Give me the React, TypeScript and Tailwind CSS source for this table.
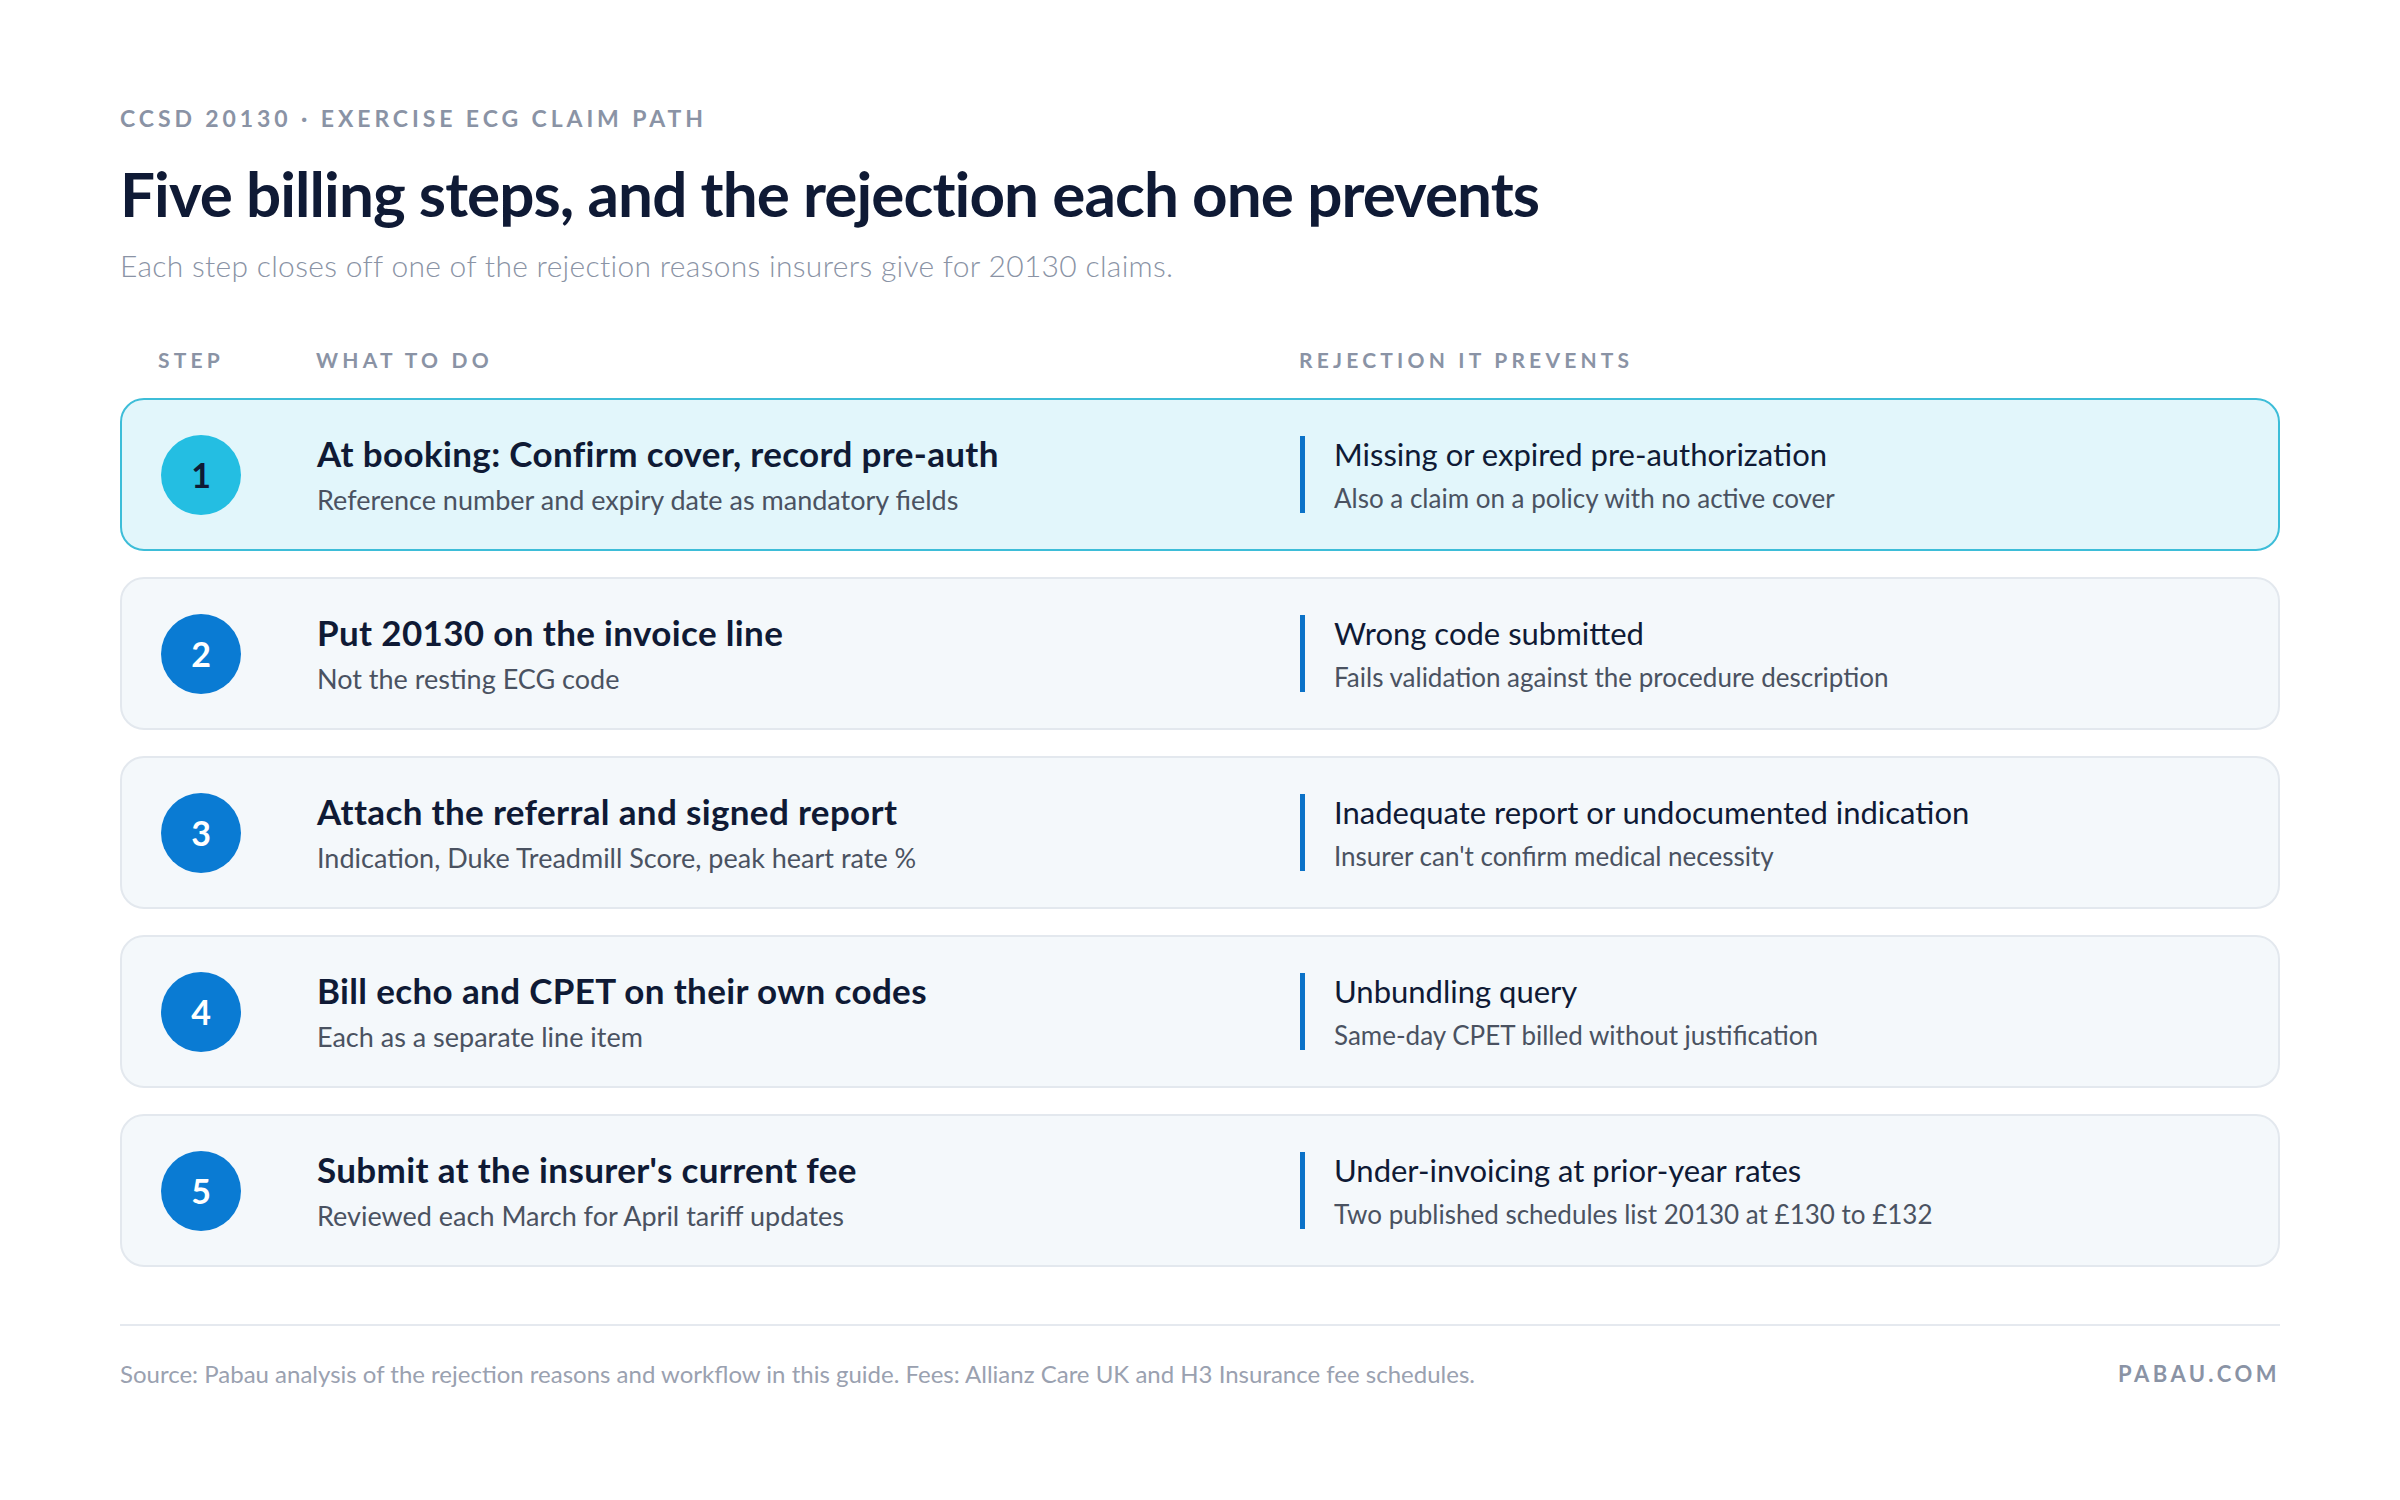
import React from "react";

const rows = [
  {
    n: "1",
    title: "At booking: Confirm cover, record pre-auth",
    sub: "Reference number and expiry date as mandatory fields",
    rt: "Missing or expired pre-authorization",
    rs: "Also a claim on a policy with no active cover",
    active: true,
  },
  {
    n: "2",
    title: "Put 20130 on the invoice line",
    sub: "Not the resting ECG code",
    rt: "Wrong code submitted",
    rs: "Fails validation against the procedure description",
  },
  {
    n: "3",
    title: "Attach the referral and signed report",
    sub: "Indication, Duke Treadmill Score, peak heart rate %",
    rt: "Inadequate report or undocumented indication",
    rs: "Insurer can't confirm medical necessity",
  },
  {
    n: "4",
    title: "Bill echo and CPET on their own codes",
    sub: "Each as a separate line item",
    rt: "Unbundling query",
    rs: "Same-day CPET billed without justification",
  },
  {
    n: "5",
    title: "Submit at the insurer's current fee",
    sub: "Reviewed each March for April tariff updates",
    rt: "Under-invoicing at prior-year rates",
    rs: "Two published schedules list 20130 at £130 to £132",
  },
];

export default function App() {
  return (
    <div
      className="w-[2400px] h-[1500px] bg-white px-[120px] pt-[104px]"
      style={{ fontFamily: "Lato, 'Open Sans', sans-serif" }}
    >
      <div className="text-[23px] leading-[28px] font-bold tracking-[0.17em] text-[#8a93a5]">
        CCSD 20130 · EXERCISE ECG CLAIM PATH
      </div>
      <h1 className="mt-[25px] text-[62px] leading-[72px] font-bold tracking-[-0.015em] text-[#0f1a35]">
        Five billing steps, and the rejection each one prevents
      </h1>
      <p className="mt-[18px] text-[30px] leading-[36px] font-light tracking-[0.01em] text-[#8a93a5]">
        Each step closes off one of the rejection reasons insurers give for 20130 claims.
      </p>

      <div className="mt-[65px] flex items-center text-[21px] leading-[24px] font-bold tracking-[0.2em] text-[#8a93a5]">
        <div className="w-[196px] pl-[38px]">STEP</div>
        <div className="w-[983px]">WHAT TO DO</div>
        <div>REJECTION IT PREVENTS</div>
      </div>

      <div className="mt-[26px] flex flex-col gap-[26px]">
        {rows.map((r) => (
          <div
            key={r.n}
            className={
              r.active
                ? "h-[153px] flex items-center rounded-[24px] border-[2px] border-[#3dbdd8] bg-[#e2f6fb] pl-[39px]"
                : "h-[153px] flex items-center rounded-[24px] border-[2px] border-[#e3e8ee] bg-[#f4f8fb] pl-[39px]"
            }
          >
            <div
              className={
                r.active
                  ? "w-[80px] h-[80px] rounded-full bg-[#24bee2] flex items-center justify-center text-[34px] font-bold text-[#0f1a35]"
                  : "w-[80px] h-[80px] rounded-full bg-[#0a7bd3] flex items-center justify-center text-[34px] font-bold text-white"
              }
            >
              {r.n}
            </div>
            <div className="ml-[76px] w-[983px]">
              <div className="text-[35px] leading-[40px] font-bold tracking-[0.01em] text-[#0f1a35]">{r.title}</div>
              <div className="mt-[11px] text-[27px] leading-[32px] text-[#4a5261]">{r.sub}</div>
            </div>
            <div className="border-l-[5px] border-[#0b72c8] pl-[29px]">
              <div className="text-[31px] leading-[36px] font-normal text-[#0f1a35]">{r.rt}</div>
              <div className="mt-[11px] text-[26px] leading-[30px] text-[#4a5261]">{r.rs}</div>
            </div>
          </div>
        ))}
      </div>

      <div className="mt-[57px] border-t-[2px] border-[#e5e9ef]" />
      <div className="mt-[34px] flex items-center justify-between">
        <div className="text-[24px] leading-[28px] text-[#9aa1b0]">
          Source: Pabau analysis of the rejection reasons and workflow in this guide. Fees: Allianz Care UK and H3 Insurance fee schedules.
        </div>
        <div className="text-[22px] leading-[28px] font-bold tracking-[0.16em] text-[#8a93a5]">PABAU.COM</div>
      </div>
    </div>
  );
}
